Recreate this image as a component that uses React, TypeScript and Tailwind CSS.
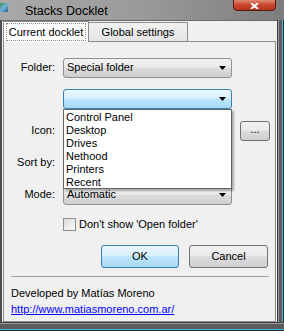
import React from 'react';

const font = { fontFamily: '"Liberation Sans", Arial, sans-serif' };

function Arrow() {
  return (
    <svg width="7" height="4" viewBox="0 0 7 4" className="shrink-0">
      <path d="M0 0 H7 L3.5 4 Z" fill="#000" />
    </svg>
  );
}

function Combo({ text, focused = false }: { text?: string; focused?: boolean }) {
  return (
    <div
      className={`flex items-center justify-between w-[169px] h-[20px] rounded-[3px] border pl-[3px] pr-[5px] text-[11px] text-black ${
        focused
          ? 'border-[#3c7fb1] bg-[linear-gradient(#eaf6fd_0%,#d9f0fc_45%,#bee6fd_50%,#a7d9f5_100%)]'
          : 'border-[#8e8f8f] bg-[linear-gradient(#f2f2f2_0%,#ebebeb_45%,#dddddd_50%,#cfcfcf_100%)]'
      }`}
    >
      <span>{text}</span>
      <Arrow />
    </div>
  );
}

function Row({ label, children }: { label?: string; children?: React.ReactNode }) {
  return (
    <div className="flex items-center h-[21px]">
      <div className="w-[52px] pr-[1px] text-right text-[11px] text-black">{label}</div>
      <div className="ml-[7px] flex items-center">{children}</div>
    </div>
  );
}

const items = ['Control Panel', 'Desktop', 'Drives', 'Nethood', 'Printers', 'Recent'];

export default function App() {
  return (
    <div style={font} className="w-[284px] h-[331px] flex flex-col bg-[#5e5e5e] overflow-hidden">
      {/* title bar */}
      <div className="relative h-[20px] shrink-0 bg-[linear-gradient(90deg,#a9a9a9_0%,#9a9a9a_50%,#7d7d7d_100%)]">
        <div className="absolute left-0 top-[3px] w-[8px] h-[9px] bg-[linear-gradient(135deg,#3d8b5c,#6fb4d6,#2e5c8a)]" />
        <div className="absolute left-[25px] top-[2px] text-[12.5px] text-black">Stacks Docklet</div>
        <div className="absolute left-[233px] top-[-1px] w-[43px] h-[12px] rounded-b-[4px] border border-[#5a1a10] bg-[linear-gradient(#e08a70_0%,#c9462c_50%,#b3341c_100%)] flex items-end justify-center pb-[1px]">
          <svg width="9" height="6" viewBox="0 0 9 6">
            <path d="M1 0 L8 6 M8 0 L1 6" stroke="#fff" strokeWidth="2" />
          </svg>
        </div>
      </div>

      <div className="flex flex-1">
        <div className="w-[2px] bg-[#4d4d4d]" />
        {/* client */}
        <div className="w-[275px] bg-[#f0f0f0] flex flex-col border-t border-[#6a6a6a]">
          {/* tabs */}
          <div className="flex h-[20px] ml-[1px] items-end">
            <div className="h-[21px] w-[86px] -mb-[1px] border border-b-0 border-[#898c95] bg-white flex items-center justify-center text-[11px] text-black z-10">
              <span className="px-[2px] outline-1 outline-dotted outline-[#888]">Current docklet</span>
            </div>
            <div className="h-[19px] w-[99px] border border-l-0 border-b-0 border-[#898c95] bg-[linear-gradient(#f2f2f2,#e3e3e3)] flex items-center justify-center text-[11px] text-black">
              Global settings
            </div>
          </div>
          {/* panel */}
          <div className="relative ml-[1px] w-[273px] flex-1 border border-[#898c95] bg-[#f0f0f0] flex flex-col">
            <div className="flex flex-col pt-[15px]">
              <Row label="Folder:">
                <Combo text="Special folder" />
              </Row>
              <div className="relative mt-[10px]">
                <Row>
                  <Combo focused />
                </Row>
                {/* dropdown */}
                <div className="absolute left-[59px] top-[21px] w-[169px] h-[80px] bg-white border border-[#646464] shadow-[2px_2px_2px_rgba(0,0,0,0.3)] z-20 text-[11px] text-black leading-[13px] pt-[1px]">
                  {items.map((it) => (
                    <div key={it} className="pl-[2px] h-[13px]">
                      {it}
                    </div>
                  ))}
                </div>
              </div>
              <div className="mt-[11px]">
                <Row label="Icon:">
                  <Combo />
                  <div className="ml-[8px] w-[30px] h-[20px] rounded-[3px] border border-[#707070] bg-[linear-gradient(#f2f2f2_0%,#ebebeb_45%,#dddddd_50%,#cfcfcf_100%)] flex items-center justify-center text-[11px] text-black leading-none pb-[3px]">
                    ...
                  </div>
                </Row>
              </div>
              <div className="mt-[11px]">
                <Row label="Sort by:">
                  <Combo />
                </Row>
              </div>
              <div className="mt-[11px]">
                <Row label="Mode:">
                  <Combo text="Automatic" />
                </Row>
              </div>
            </div>
            <div className="flex items-center ml-[59px] mt-[12px] h-[14px]">
              <div className="w-[13px] h-[13px] border border-[#8e8f8f] bg-[linear-gradient(135deg,#dcdcdc,#fafafa)]" />
              <span className="ml-[3px] text-[11px] text-black">Don't show 'Open folder'</span>
            </div>
            <div className="flex ml-[97px] mt-[14px] gap-[10px]">
              <div className="w-[78px] h-[23px] rounded-[3px] border border-[#3c7fb1] bg-[linear-gradient(#eaf6fd_0%,#d9f0fc_45%,#bee6fd_50%,#a7d9f5_100%)] flex items-center justify-center text-[11px] text-black">
                OK
              </div>
              <div className="w-[79px] h-[23px] rounded-[3px] border border-[#707070] bg-[linear-gradient(#f2f2f2_0%,#ebebeb_45%,#dddddd_50%,#cfcfcf_100%)] flex items-center justify-center text-[11px] text-black">
                Cancel
              </div>
            </div>
            <div className="ml-[7px] mt-[8px] w-[258px] h-[1px] bg-[#a0a0a0]" />
            <div className="ml-[7px] mt-[9px] text-[11px] text-black leading-[15px]">Developed by Matías Moreno</div>
            <div className="ml-[7px] mt-[1px] text-[11px] text-[#0000ff] underline leading-[15px]">
              http://www.matiasmoreno.com.ar/
            </div>
          </div>
        </div>
        {/* right frame */}
        <div className="w-[7px] flex">
          <div className="w-[1px] bg-[#3c3c3c]" />
          <div className="w-[1px] bg-[#9a9a9a]" />
          <div className="w-[3px] bg-[#5c5c5c]" />
          <div className="w-[1px] bg-[#3fb8e6]" />
          <div className="w-[1px] bg-[#2a2a2a]" />
        </div>
      </div>
      {/* bottom frame */}
      <div className="h-[9px] shrink-0 flex flex-col">
        <div className="h-[1px] bg-[#3c3c3c]" />
        <div className="h-[1px] bg-[#9a9a9a]" />
        <div className="h-[5px] bg-[#5c5c5c]" />
        <div className="h-[1px] bg-[#3fb8e6]" />
        <div className="h-[1px] bg-[#2a2a2a]" />
      </div>
    </div>
  );
}
